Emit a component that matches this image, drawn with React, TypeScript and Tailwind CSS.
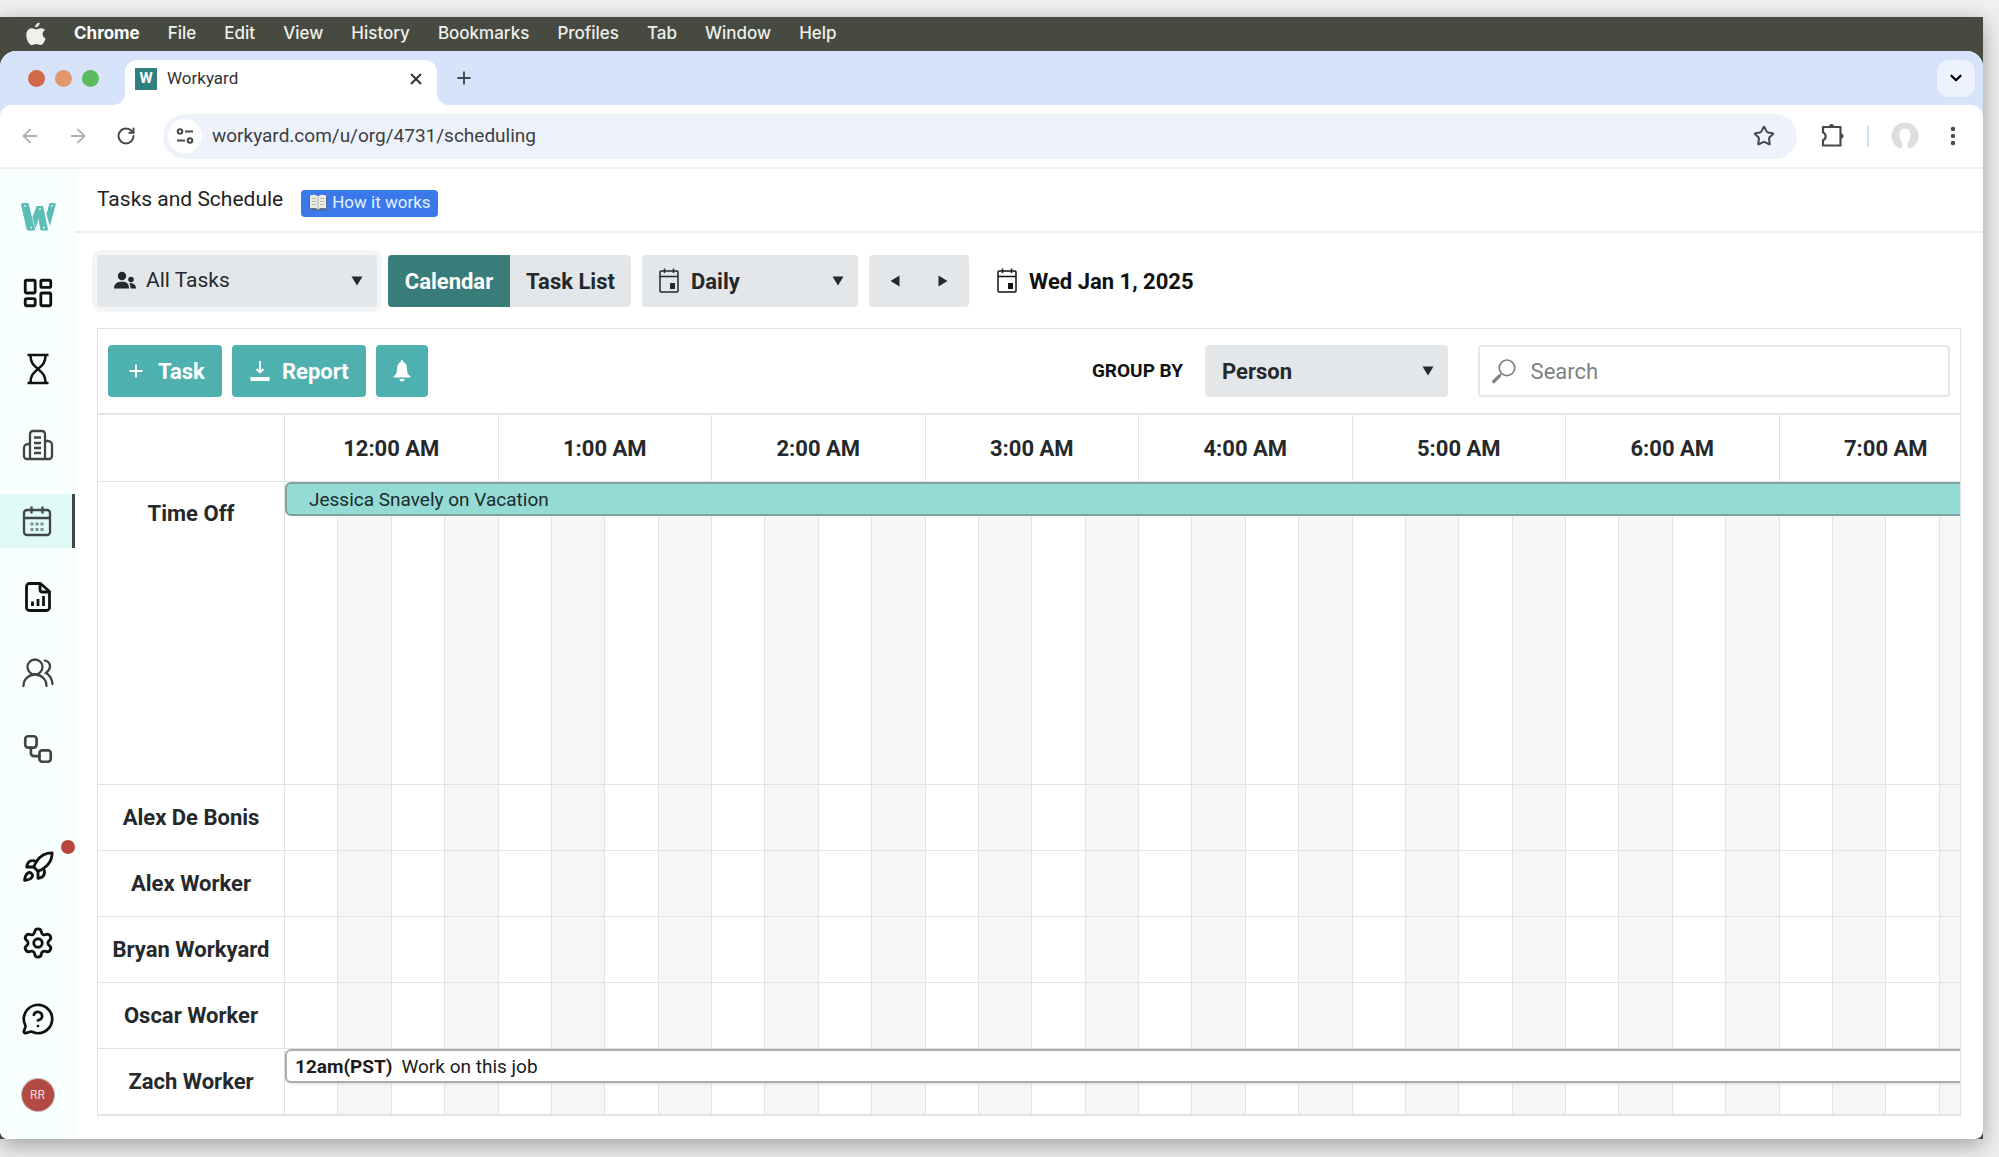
import { ReactNode } from "react";
import clsx from "clsx";
import {
  ArrowLeft, ArrowRight, ChevronDown, EllipsisVertical, LayoutDashboard,
  MessageCircleQuestionMark, Plus, Rocket, RotateCw, Settings, Star, Workflow, X,
} from "lucide-react";

const menus = ["File", "Edit", "View", "History", "Bookmarks", "Profiles", "Tab", "Window", "Help"];

const hours = ["12:00 AM", "1:00 AM", "2:00 AM", "3:00 AM", "4:00 AM", "5:00 AM", "6:00 AM", "7:00 AM"];

// four quarter-hour cells for every hour
const quarters = Array.from({ length: hours.length * 4 }, (_, i) => i);

type Row = { name: string, tall?: boolean, event?: ReactNode }

const rows: Row[] = [
  {
    name: "Time Off",
    tall: true,
    event: (
      <div className="absolute left-0 top-0 z-10 flex h-[34px] w-[3300%] items-center whitespace-nowrap rounded-md border-2 border-[#7fa3a1] bg-[#94dad5] pl-[22px] pt-0.5 text-[19px] text-[#1c2b2b]">
        Jessica Snavely on Vacation
      </div>
    ),
  },
  { name: "Alex De Bonis" },
  { name: "Alex Worker" },
  { name: "Bryan Workyard" },
  { name: "Oscar Worker" },
  {
    name: "Zach Worker",
    event: (
      <div className="absolute left-0 top-0 z-10 flex h-[34px] w-[3300%] items-center gap-[9px] whitespace-nowrap rounded-md border-2 border-[#a9adad] bg-white pl-2 pt-0.5 text-[19px] text-[#1b1b1b] shadow-sm">
        <b>12am(PST)</b>
        <span>Work on this job</span>
      </div>
    ),
  },
];

const AppleLogo = () => (
  <svg viewBox="0 0 20 24" className="h-[26px] w-5" fill="currentColor">
    <path d="M13.600.4c.2 2.600-2 5-4.400 5C8.900 2.900 11.100.6 13.600.4z" />
    <path d="M18.900 8.100c-3.400 2.200-2.800 6.900.7 8.300-.8 2.500-2.900 6.600-5.200 6.700-1.600 0-2.200-1-4.100-1s-2.600 1-4.100 1C3.200 23.100.3 17.600.3 13.200c0-4.400 2.700-6.900 5.500-6.900 1.800 0 3.200 1.200 4.300 1.200 1 0 2.800-1.400 5-1.300 1.600.1 2.900.7 3.800 1.900z" />
  </svg>
);

const WorkyardLogo = () => (
  <svg viewBox="0 0 35 28" className="ml-0.5 h-7 w-[35px]">
    <g fill="#5bbdb5">
      <path d="M0 1.500Q0 0 1.500 0H7.500L14 26.500Q14 27.500 13 27.500H7Q6 27.500 5.700 26.500Z" />
      <path d="M15.500 3.500H21L14.500 26L11.500 14Z" />
      <path d="M15.500 3H22L27 26.500Q27 27.500 26 27.500H20.500Q19.500 27.500 19.300 26.500Z" />
      <path d="M28.500 0H33.500Q35 0 34.700 1.500L29 23L27 17L25.500 11Z" />
    </g>
    <g fill="#d5f3f0">
      <circle cx="4" cy="3" r="1" />
      <circle cx="10" cy="24.500" r="1" />
      <circle cx="19" cy="6" r="1" />
      <circle cx="23" cy="24.500" r="1" />
      <circle cx="31" cy="3" r="1" />
    </g>
  </svg>
);

const HourglassIcon = () => (
  <svg viewBox="0 0 32 32" className="size-8" fill="none" stroke="currentColor" strokeWidth="2.500">
    <path d="M5.500 2H26.500M5.500 30H26.500" />
    <path d="M8.500 2C8.500 10 11.500 12 16 16C20.500 12 23.500 10 23.500 2M8.500 30C8.500 22 11.500 20 16 16C20.500 20 23.500 22 23.500 30" />
  </svg>
);

const BuildingIcon = () => (
  <svg viewBox="0 0 32 32" className="size-8" fill="none" stroke="currentColor" strokeWidth="2.300">
    <path d="M8 30V5a3 3 0 0 1 3-3h9a3 3 0 0 1 3 3V30" />
    <path d="M8 15H6a4 4 0 0 0-4 4V27a3 3 0 0 0 3 3H27a3 3 0 0 0 3-3V16a4 4 0 0 0-4-4H23" />
    <path d="M12 8.500h7M12 14h7M12 19h7M12 24h7" strokeWidth="2.500" />
  </svg>
);

const CalendarIcon = () => (
  <svg viewBox="0 0 32 32" className="size-8" fill="none" stroke="currentColor" strokeWidth="2.300">
    <rect x="2" y="5" width="26" height="25" rx="3" />
    <path d="M2 13H28M9.500 1.500V8.500M20.500 1.500V8.500" />
    <path d="M8.500 19h3M13.500 19h3M18.500 19h3M8.500 24.500h3M13.500 24.500h3M18.500 24.500h3" strokeWidth="3" className="opacity-60" />
  </svg>
);

const ReportIcon = () => (
  <svg viewBox="0 0 32 32" className="size-8" fill="none" stroke="currentColor" strokeWidth="2.800" strokeLinejoin="round">
    <path d="M18.500 2.500H7.500a3 3 0 0 0-3 3V26.500a3 3 0 0 0 3 3H24.500a3 3 0 0 0 3-3V10.500Z" />
    <path d="M18 3V8.500a2.500 2.500 0 0 0 2.500 2.500H27" />
    <path d="M10.500 20.500V25M16 18V25M21.500 15V25" />
  </svg>
);

const PeopleIcon = () => (
  <svg viewBox="0 0 32 32" className="size-8" fill="none" stroke="currentColor" strokeWidth="2.300" strokeLinecap="round">
    <circle cx="13" cy="10" r="7.500" />
    <path d="M1.500 29C1.500 22 7 17.500 13 17.500S24.500 22 24.500 29" />
    <path d="M23 3.500C26.500 4.500 28 7 28 9.500S26.500 14 24 16C28.500 18.500 30 22.500 30.500 27" />
  </svg>
);

const DayIcon = () => (
  <svg viewBox="0 0 20 28" className="h-7 w-5" fill="none" stroke="currentColor" strokeWidth="1.500">
    <rect x="1" y="4" width="18" height="21" rx="1" />
    <path d="M1 9.500H19M5.500 1.500V6M14.500 1.500V6" />
    <path d="M11 16h5v6h-5z" fill="currentColor" stroke="none" />
  </svg>
);

const GroupIcon = () => (
  <svg viewBox="0 0 22 20" className="h-5 w-[22px]" fill="currentColor">
    <circle cx="8" cy="5" r="4.200" />
    <path d="M0 17.500C0 12.500 3.500 10.800 8 10.800S15 12.500 15 17.500Z" />
    <circle cx="17" cy="8.500" r="2.800" />
    <path d="M16.500 17.500C16.500 15 16 13.500 15 12.300C18.500 11.600 22 13 22 17.500Z" />
  </svg>
);

const SearchIcon = () => (
  <svg viewBox="0 0 28 28" className="size-7" fill="none" stroke="#7d8181" strokeLinecap="round">
    <circle cx="17.500" cy="10.500" r="8.500" strokeWidth="1.800" />
    <path d="M11.500 17L9.500 19" strokeWidth="1.800" />
    <path d="M9 19.500L3 25.500" strokeWidth="3.500" />
  </svg>
);

const BookIcon = () => (
  <svg viewBox="0 0 20 18" className="h-[18px] w-5">
    <path d="M1 2.500H19V16.500H1Z" fill="#4e6a8f" />
    <path d="M2 1.500C5 .5 8 .5 10 2.500C12 .5 15 .5 18 1.500V14.500C15 13.700 12 13.900 10 15.500C8 13.900 5 13.700 2 14.500Z" fill="#eceae6" />
    <path d="M10 2.500V15.500M4 4.500H8M4 7.500H8M4 10.500H8M12 4.500H16M12 7.500H16M12 10.500H16" stroke="#b3b3b0" />
  </svg>
);

const Triangle = ({ className }: { className?: string }) => (
  <svg viewBox="0 0 12 10" className={clsx("h-[10px] w-3", className)} fill="currentColor">
    <path d="M0.500 0.500H11.500L6 9.500Z" />
  </svg>
);

type DropdownProps = { id: string, label: string, options: string[], icon?: ReactNode, className: string, selectClassName: string }

const Dropdown = ({ id, label, options, icon, className, selectClassName }: DropdownProps) => (
  <div className={clsx("relative flex h-[52px] items-center rounded bg-[#e4e7ea] text-[#25292b]", className)}>
    {icon && <span className="pointer-events-none absolute left-[17px]">{icon}</span>}
    <select id={id} aria-label={label} className={clsx("h-full w-full appearance-none bg-transparent pr-8", selectClassName)}>
      {options.map((o) => <option key={o}>{o}</option>)}
    </select>
    <Triangle className="pointer-events-none absolute right-[14px]" />
  </div>
);

type NavItemProps = { label: string, active?: boolean, children: ReactNode }

const NavItem = ({ label, active, children }: NavItemProps) => (
  <a
    href="#"
    aria-label={label}
    className={clsx(
      "relative flex h-[54px] w-full shrink-0 items-center justify-center",
      active && "bg-[#e0faf7] shadow-[inset_-3px_0_0_#3f4747]",
    )}
  >
    {children}
  </a>
);

const MenuBar = () => (
  <nav className="flex h-[34px] items-center gap-7 pl-[26px] font-[Inter] text-[17px] font-medium text-[#eef0ec]">
    <AppleLogo />
    <b className="text-white">Chrome</b>
    {menus.map((m) => <span key={m}>{m}</span>)}
  </nav>
);

const TabStrip = () => (
  <div className="flex h-[54px] items-center bg-[#d7e3fb] pl-7 pr-2">
    <div className="mr-[14px] flex gap-[10px]">
      <span className="size-[17px] rounded-full bg-[#d2674a]" />
      <span className="size-[17px] rounded-full bg-[#e2986b]" />
      <span className="size-[17px] rounded-full bg-[#5cbb5c]" />
    </div>
    <svg viewBox="0 0 12 12" className="size-3 self-end" fill="#fff"><path d="M12 0V12H0A12 12 0 0 0 12 0Z" /></svg>
    <div className="flex h-[45px] w-[312px] items-center self-end rounded-t-xl bg-white pb-2 pl-[10px] pr-3 text-[17px] text-[#333]">
      <span className="mr-[10px] flex size-[22px] items-center justify-center bg-[#2f7f80] text-[15px] font-bold text-white">W</span>
      Workyard
      <button aria-label="Close tab" className="ml-auto"><X className="size-[18px]" strokeWidth={2.5} /></button>
    </div>
    <svg viewBox="0 0 12 12" className="size-3 self-end" fill="#fff"><path d="M0 0V12H12A12 12 0 0 1 0 0Z" /></svg>
    <button aria-label="New tab" className="ml-[5px] text-[#3d4a50]"><Plus className="size-5" strokeWidth={2.2} /></button>
    <button aria-label="Search tabs" className="ml-auto flex h-[37px] w-[38px] items-center justify-center rounded-xl bg-[#edf3fd]">
      <ChevronDown className="size-[18px]" strokeWidth={3} />
    </button>
  </div>
);

const AddressBar = () => (
  <div className="bg-[#d7e3fb]">
    <div className="flex h-16 items-center rounded-t-xl border-b-2 border-[#eeeff0] bg-white pl-[19px] pr-[18px] text-[#454a4d]">
      <button aria-label="Back" className="mr-[26px] text-[#aeb1b3]"><ArrowLeft className="size-[22px]" /></button>
      <button aria-label="Forward" className="mr-[27px] text-[#aeb1b3]"><ArrowRight className="size-[22px]" /></button>
      <button aria-label="Reload"><RotateCw className="size-5" strokeWidth={2.4} /></button>
      <div className="ml-[27px] flex h-[45px] flex-1 items-center rounded-full bg-[#edf2fb] pl-[5px] pr-[22px]">
        <button aria-label="Site information" className="flex size-[34px] items-center justify-center rounded-full bg-white">
          <svg viewBox="0 0 18 18" className="size-[18px]" fill="none" stroke="currentColor" strokeWidth="2">
            <circle cx="4" cy="4.500" r="2.300" />
            <path d="M9 4.500H17" />
            <circle cx="14" cy="13.500" r="2.300" />
            <path d="M1 13.500H9" />
          </svg>
        </button>
        <input aria-label="Address" defaultValue="workyard.com/u/org/4731/scheduling" className="ml-[10px] flex-1 bg-transparent text-[19px] text-[#3c4043]" />
        <button aria-label="Bookmark this page"><Star className="size-[22px]" strokeWidth={2.2} /></button>
      </div>
      <button aria-label="Extensions" className="ml-[21px]">
        <svg viewBox="0 0 28 28" className="size-7" fill="none" stroke="currentColor" strokeWidth="2.200" strokeLinejoin="round">
          <path d="M5 5H22.500V23.500H5V18C8.500 17 8.500 11.500 5 10.500Z" />
          <path d="M11 4.500a2.500 2.500 0 0 1 5 0ZM23 11.500a2.500 2.500 0 0 1 0 5Z" fill="currentColor" stroke="none" />
        </svg>
      </button>
      <span className="ml-[21px] h-[21px] w-0.5 bg-[#cfe0f9]" />
      <button aria-label="Profile" className="ml-[22px]">
        <svg viewBox="0 0 28 28" className="size-7">
          <circle cx="14" cy="14" r="13.500" fill="#dcdfde" />
          <path d="M14 6.500C9.500 6.500 8.500 10 8.500 13C8.500 17 10 19 11.500 20.500V24.500L9 27.500H19L16.500 24.500V20.500C18 19 19.500 17 19.500 13C19.500 10 18.500 6.500 14 6.500Z" fill="#fff" />
        </svg>
      </button>
      <button aria-label="Browser menu" className="ml-[22px]"><EllipsisVertical className="size-6" strokeWidth={2.4} /></button>
    </div>
  </div>
);

const Sidebar = () => (
  <nav className="flex w-[75px] shrink-0 flex-col items-center gap-[22px] bg-[#f8ffff] pt-[21px] text-[#111]">
    <NavItem label="Workyard"><WorkyardLogo /></NavItem>
    <NavItem label="Dashboard"><LayoutDashboard className="size-[34px]" strokeWidth={2} /></NavItem>
    <NavItem label="Time"><HourglassIcon /></NavItem>
    <NavItem label="Projects"><span className="text-[#3f4444]"><BuildingIcon /></span></NavItem>
    <NavItem label="Schedule" active><span className="text-[#3f4747]"><CalendarIcon /></span></NavItem>
    <NavItem label="Reports"><ReportIcon /></NavItem>
    <NavItem label="People"><span className="text-[#3f4444]"><PeopleIcon /></span></NavItem>
    <NavItem label="Integrations"><Workflow className="size-[34px] text-[#3f4444]" strokeWidth={1.9} /></NavItem>
    <span className="h-5" />
    <NavItem label="What's new">
      <Rocket className="size-[34px]" strokeWidth={2} />
      <span className="absolute right-0 top-0 size-[14px] rounded-full bg-[#b8463c]" />
    </NavItem>
    <NavItem label="Settings"><Settings className="size-[34px]" strokeWidth={2} /></NavItem>
    <NavItem label="Help"><MessageCircleQuestionMark className="size-[34px]" strokeWidth={1.9} /></NavItem>
    <NavItem label="Account">
      <span className="flex size-8 items-center justify-center rounded-full bg-[#b04a42] text-[12px] text-[#f6dcd8] ring-1 ring-[#c9b5b1]">RR</span>
    </NavItem>
  </nav>
);

const Filters = () => (
  <div className="flex items-center gap-[11px] text-[22px] font-bold">
    <Dropdown
      id="tasks"
      label="Tasks"
      options={["All Tasks"]}
      icon={<GroupIcon />}
      className="w-[280px] ring-[5px] ring-[#f4f5f6]"
      selectClassName="pl-[49px] text-[21px] font-normal"
    />
    <div className="flex h-[52px] overflow-hidden rounded bg-[#e4e7ea]">
      <button className="w-[122px] bg-[#387d7a] text-white">Calendar</button>
      <button className="w-[121px] text-[#25292b]">Task List</button>
    </div>
    <Dropdown id="range" label="Range" options={["Daily"]} icon={<DayIcon />} className="w-[216px]" selectClassName="pl-[49px]" />
    <div className="flex h-[52px] items-center rounded bg-[#e4e7ea] px-0.5 text-[#25292b]">
      <button aria-label="Previous day" className="flex h-full w-12 items-center justify-center"><Triangle className="rotate-90" /></button>
      <button aria-label="Next day" className="flex h-full w-12 items-center justify-center"><Triangle className="-rotate-90" /></button>
    </div>
    <button className="ml-[17px] flex items-center gap-3 text-[#111]"><DayIcon />Wed Jan 1, 2025</button>
  </div>
);

const PanelToolbar = () => (
  <div className="flex items-center border-b-2 border-[#e3e6e6] py-4 pl-[10px] pr-[10px] text-[22px] font-bold">
    <div className="flex gap-[10px] text-white">
      <button className="flex h-[52px] w-[114px] items-center rounded bg-[#4fb1af] pl-[18px]">
        <Plus className="mr-3 size-5" strokeWidth={2.4} />Task
      </button>
      <button className="flex h-[52px] w-[134px] items-center rounded bg-[#4fb1af] pl-[18px]">
        <svg viewBox="0 0 20 24" className="mr-3 h-6 w-5" fill="none" stroke="currentColor" strokeWidth="1.800">
          <path d="M10 2V13M6.500 10L10 13.500L13.500 10" />
          <path d="M0.500 20H19.500" strokeWidth="4" />
        </svg>
        Report
      </button>
      <button aria-label="Notifications" className="flex h-[52px] w-[52px] items-center justify-center rounded bg-[#4fb1af]">
        <svg viewBox="0 0 18 24" className="h-6 w-[18px]" fill="currentColor">
          <path d="M9 1C9.900 1 10.300 2 10.300 3C13 4 14 7 14 10C14 14 15 15.500 17.500 17.500V18.500H0.500V17.500C3 15.500 4 14 4 10C4 7 5 4 7.700 3C7.700 2 8.100 1 9 1ZM6.500 20H11.500C11.500 21.500 10.500 22.500 9 22.500S6.500 21.500 6.500 20Z" />
        </svg>
      </button>
    </div>
    <label htmlFor="group-by" className="ml-auto text-[19px] text-[#111]">GROUP BY</label>
    <Dropdown id="group-by" label="Group by" options={["Person"]} className="ml-[22px] w-[243px]" selectClassName="pl-[17px]" />
    <label className="ml-[30px] flex h-[52px] w-[472px] items-center rounded border-2 border-[#e6e8e8] pl-[11px] font-normal">
      <SearchIcon />
      <input type="search" aria-label="Search" placeholder="Search" className="ml-[14px] w-full bg-transparent text-[22px] placeholder:text-[#7d8282]" />
    </label>
  </div>
);

const Timeline = () => (
  // the last hour runs past the right edge
  <div className="overflow-hidden">
    <table className="w-[calc(100%+32px)] table-fixed border-separate border-spacing-0 text-[22px] text-[#25292b]">
      <colgroup>
        <col className="w-[186px]" />
        {quarters.map((q) => <col key={q} />)}
      </colgroup>
      <thead>
        <tr className="h-[66px]">
          <td />
          {hours.map((h) => <th key={h} scope="col" colSpan={4} className="border-l border-[#dfe3e3] p-0 font-bold">{h}</th>)}
        </tr>
      </thead>
      <tbody>
        {rows.map(({ name, tall, event }) => (
          <tr key={name} className={tall ? "h-[303px]" : "h-[66px]"}>
            <th scope="row" className={clsx("border-t border-[#dfe3e3] p-0 font-bold leading-7", tall && "pt-[18px] align-top")}>{name}</th>
            {quarters.map((q) => (
              <td key={q} className={clsx("relative border-l border-t border-[#e1e4e4] p-0", q % 2 === 1 && "bg-[#f6f6f6]")}>
                {q === 0 && event}
              </td>
            ))}
          </tr>
        ))}
      </tbody>
    </table>
  </div>
);

export default function App() {
  return (
    <div className="min-h-screen bg-[#f0f0f0] pr-4 pt-[17px] font-[Roboto,sans-serif]">
      <div className="bg-[#464a40] shadow-[0_6px_22px_rgba(0,0,0,0.35)]">
        <MenuBar />
        <div className="overflow-hidden rounded-b-lg rounded-t-2xl bg-white">
          <TabStrip />
          <AddressBar />
          <div className="flex">
            <Sidebar />
            <main className="min-w-0 flex-1">
              <header className="flex h-16 items-center gap-[18px] border-b-2 border-[#eceeee] pl-[22px]">
                <h1 className="text-[21px] text-[#222]">Tasks and Schedule</h1>
                <button className="mt-1.5 flex h-[27px] items-center gap-1 rounded bg-[#3a78ec] px-[7px] text-[17px] text-[#e4f2ff]">
                  <BookIcon />How it works
                </button>
              </header>
              <div className="flex flex-col gap-[21px] px-[22px] pb-[23px] pt-[22px]">
                <Filters />
                <section className="border border-b-2 border-[#dfe3e3]">
                  <PanelToolbar />
                  <Timeline />
                </section>
              </div>
            </main>
          </div>
        </div>
      </div>
    </div>
  );
}
